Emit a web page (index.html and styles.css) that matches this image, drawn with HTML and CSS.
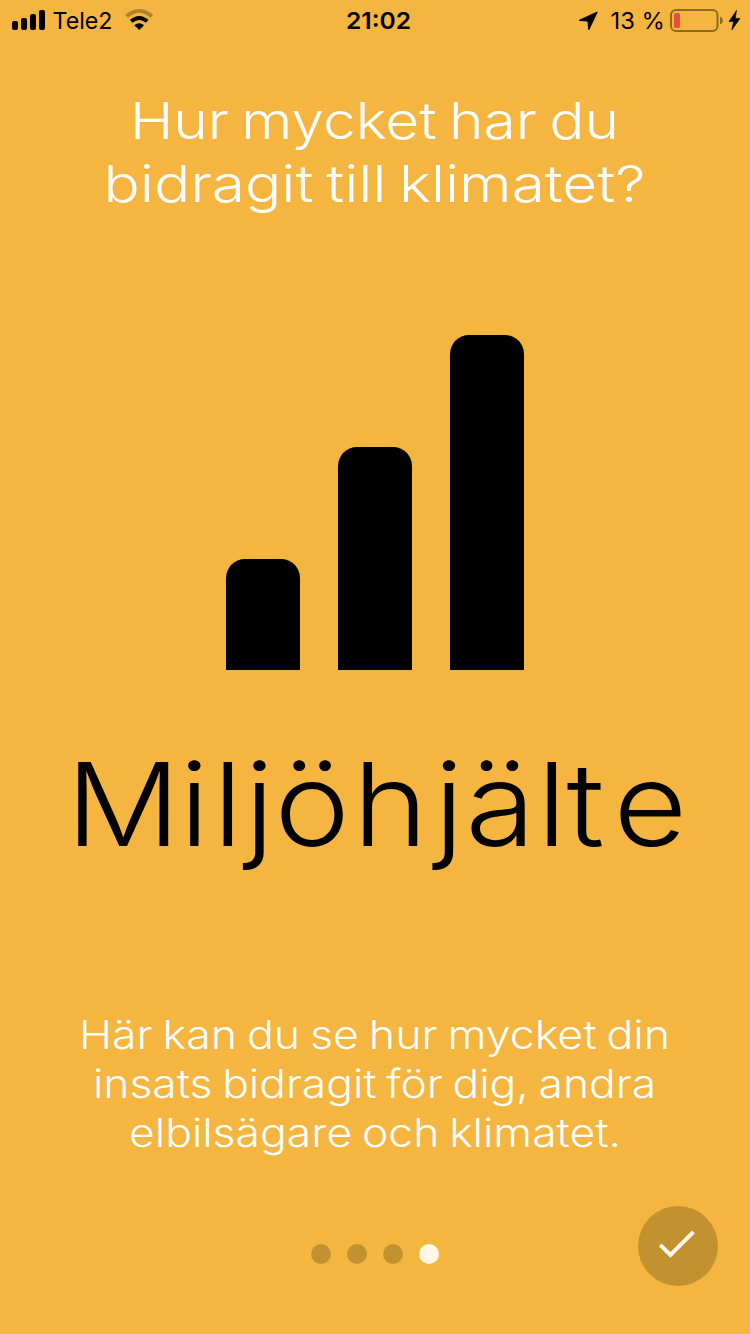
FILE: index.html
```html
<!DOCTYPE html>
<html lang="sv">
<head>
<meta charset="utf-8">
<title>Miljöhjälte</title>
<link rel="stylesheet" href="styles.css">
</head>
<body>
<main class="screen">
  <header class="status">
    <svg class="status-art" viewBox="0 0 750 44">
      <rect x="12" y="21" width="6" height="9" rx="2"/>
      <rect x="21" y="18" width="6" height="12" rx="2"/>
      <rect x="30" y="14" width="6" height="16" rx="2"/>
      <rect x="39" y="10" width="6" height="20" rx="2"/>
      <text class="status-text" x="52.500" y="29" textLength="60" lengthAdjust="spacingAndGlyphs">Tele2</text>
      <path d="M126.500 16.200Q139.200 5.800 151.900 16.200" fill="none" stroke="#000" stroke-opacity=".28" stroke-width="4"/>
      <path d="M131.200 21.300Q139.200 14.700 147.200 21.300" fill="none" stroke="#000" stroke-width="4"/>
      <path d="M134.300 25.200Q139.200 21.400 144.100 25.200L139.200 30Z"/>
      <text class="status-text clock" x="346" y="29" textLength="65" lengthAdjust="spacingAndGlyphs">21:02</text>
      <path d="M597 12.300L579.500 20.300L588 21L588.800 29.500Z" stroke="#000" stroke-width="1.200" stroke-linejoin="round"/>
      <text class="status-text" x="610.500" y="29" textLength="54.500" lengthAdjust="spacingAndGlyphs">13 %</text>
      <rect x="671" y="10" width="46.500" height="21" rx="5" fill="none" stroke="#000" stroke-opacity=".42" stroke-width="2"/>
      <path d="M720 16.500Q723 18 723 20.500Q723 23 720 24.500Z" opacity=".42"/>
      <rect x="674" y="13" width="6" height="15" rx="1.500" fill="#eb4d3d"/>
      <path d="M736.500 10.500L729 21.500H733.600L731.800 30L740 18.400H735.200Z" stroke="#000" stroke-width=".6"/>
    </svg>
  </header>
  <svg class="title" viewBox="0 0 750 150">
    <text x="130" y="59.300" textLength="489" lengthAdjust="spacingAndGlyphs">Hur mycket har du</text>
    <text x="103.500" y="122" textLength="542" lengthAdjust="spacingAndGlyphs">bidragit till klimatet?</text>
  </svg>
  <div class="bars">
    <div class="bar bar-low"></div>
    <div class="bar bar-mid"></div>
    <div class="bar bar-high"></div>
  </div>
  <svg class="wordmark" viewBox="0 0 750 160">
    <text transform="scale(1.1 1)" y="115.700" x="60 163.200 193.600 222.300 249.500 320.900 394.500 423.200 488.200 515 557.700">Miljöhjälte</text>
  </svg>
  <svg class="lead" viewBox="0 0 750 170">
    <text x="79" y="49" textLength="591" lengthAdjust="spacingAndGlyphs">Här kan du se hur mycket din</text>
    <text x="93" y="98" textLength="563" lengthAdjust="spacingAndGlyphs">insats bidragit för dig, andra</text>
    <text x="129" y="147" textLength="492" lengthAdjust="spacingAndGlyphs">elbilsägare och klimatet.</text>
  </svg>
  <footer class="footer">
    <nav class="dots"><i class="dot"></i><i class="dot"></i><i class="dot"></i><i class="dot dot-active"></i></nav>
    <button class="done" aria-label="Klar">
      <svg class="check" viewBox="0 0 80 80"><path d="M22.200 38.800L32.400 49L55.500 25.800"/></svg>
    </button>
  </footer>
</main>
</body>
</html>
```
FILE: styles.css
```css
body { margin: 0; background: #f4b640; }
.screen {
  width: 750px; height: 1334px; overflow: hidden;
  display: flex; flex-direction: column;
  background: #f4b640; color: #fff; font-family: Inter, sans-serif;
}
svg { display: block; flex: none; }
.status { height: 44px; margin-bottom: 36px; }
.status-art { width: 750px; height: 44px; }
.status-text { font-size: 23.500px; font-weight: 400; }
.clock { font-weight: 600; }
.title { width: 750px; height: 150px; fill: #fff; font-size: 51px; font-weight: 300; word-spacing: -.07em; }
.bars {
  display: flex; align-items: flex-end; justify-content: center; gap: 37.300px;
  height: 335.500px; margin-top: 104.500px;
}
.bar { width: 74.700px; background: #000; border-radius: 19px 19px 0 0; }
.bar-low { height: 111.500px; }
.bar-mid { height: 223.500px; }
.bar-high { height: 335.500px; }
.wordmark { width: 750px; height: 160px; margin-top: 60px; fill: #000; font-size: 115.500px; font-weight: 300; }
.lead { width: 750px; height: 170px; margin-top: 110px; fill: #fff; font-size: 39px; font-weight: 300; word-spacing: -.06em; }
.footer {
  display: grid; grid-template-columns: 1fr auto 1fr; align-items: center;
  height: 80px; margin-top: 36px; padding: 0 32px;
}
.dots { grid-column: 2; display: flex; gap: 16px; padding-top: 16px; }
.dot { width: 20px; height: 20px; border-radius: 50%; background: #c39230; }
.dot-active { background: #fff8e9; }
.done { justify-self: end; width: 80px; height: 80px; padding: 0; border: 0; border-radius: 50%; background: #c39230; }
.check { width: 80px; height: 80px; fill: none; stroke: #fff8e9; stroke-width: 4; }
```
